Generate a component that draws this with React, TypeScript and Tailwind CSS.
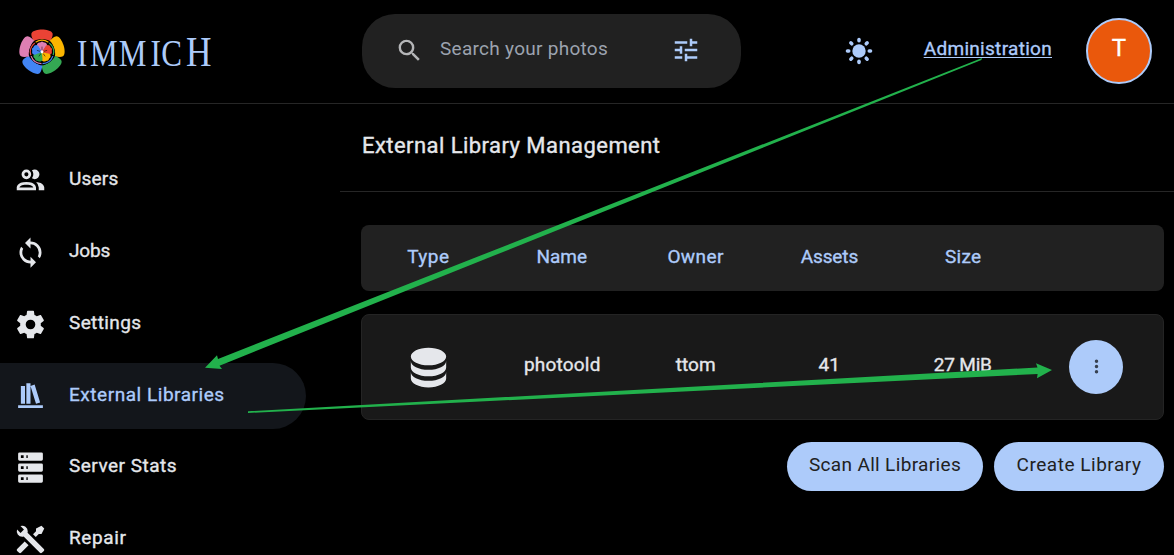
import type { ReactNode } from "react";

const icons = {
  magnify:
    "M9.5,3A6.5,6.5 0 0,1 16,9.5C16,11.11 15.41,12.59 14.44,13.73L14.71,14H15.5L20.5,19L19,20.5L14,15.5V14.71L13.73,14.44C12.59,15.41 11.11,16 9.5,16A6.5,6.5 0 0,1 3,9.5A6.5,6.5 0 0,1 9.5,3M9.5,5C7,5 5,7 5,9.5C5,12 7,14 9.5,14C12,14 14,12 14,9.5C14,7 12,5 9.5,5Z",
  tune: "M3 17v2h6v-2H3zM3 5v2h10V5H3zm10 16v-2h8v-2h-8v-2h-2v6h2zM7 9v2H3v2h4v2h2V9H7zm14 4v-2H11v2h10zm-6-4h2V7h4V5h-4V3h-2v6z",
  users:
    "M13.07 10.41A5 5 0 0 0 13.07 4.59A3.39 3.39 0 0 1 15 4A3.5 3.5 0 0 1 15 11A3.39 3.39 0 0 1 13.07 10.41M5.5 7.5A3.5 3.5 0 1 1 9 11A3.5 3.5 0 0 1 5.5 7.5M7.5 7.5A1.5 1.5 0 1 0 9 6A1.5 1.5 0 0 0 7.5 7.5M16 17V19H2V17S2 13 9 13 16 17 16 17M14 17C13.86 16.22 12.67 15 9 15S4.07 16.31 4 17M15.95 13A5.32 5.32 0 0 1 18 17V19H22V17S22 13.37 15.94 13Z",
  sync: "M12,18A6,6 0 0,1 6,12C6,11 6.25,10.03 6.7,9.2L5.24,7.74C4.46,8.97 4,10.43 4,12A8,8 0 0,0 12,20V23L16,19L12,15M12,4V1L8,5L12,9V6A6,6 0 0,1 18,12C18,13 17.75,13.97 17.3,14.8L18.76,16.26C19.54,15.03 20,13.57 20,12A8,8 0 0,0 12,4Z",
  cog: "M12,15.5A3.5,3.5 0 0,1 8.5,12A3.5,3.5 0 0,1 12,8.5A3.5,3.5 0 0,1 15.5,12A3.5,3.5 0 0,1 12,15.5M19.43,12.97C19.47,12.65 19.5,12.33 19.5,12C19.5,11.67 19.47,11.34 19.43,11L21.54,9.37C21.73,9.22 21.78,8.95 21.66,8.73L19.66,5.27C19.54,5.05 19.27,4.96 19.05,5.05L16.56,6.05C16.04,5.66 15.5,5.32 14.87,5.07L14.5,2.42C14.46,2.18 14.25,2 14,2H10C9.75,2 9.54,2.18 9.5,2.42L9.13,5.07C8.5,5.32 7.96,5.66 7.44,6.05L4.95,5.05C4.73,4.96 4.46,5.05 4.34,5.27L2.34,8.73C2.21,8.95 2.27,9.22 2.46,9.37L4.57,11C4.53,11.34 4.5,11.67 4.5,12C4.5,12.33 4.53,12.65 4.57,12.97L2.46,14.63C2.27,14.78 2.21,15.05 2.34,15.27L4.34,18.73C4.46,18.95 4.73,19.03 4.95,18.95L7.44,17.94C7.96,18.34 8.5,18.68 9.13,18.93L9.5,21.58C9.54,21.82 9.75,22 10,22H14C14.25,22 14.46,21.82 14.5,21.58L14.87,18.93C15.5,18.67 16.04,18.34 16.56,17.94L19.05,18.95C19.27,19.03 19.54,18.95 19.66,18.73L21.66,15.27C21.78,15.05 21.73,14.78 21.54,14.63L19.43,12.97Z",
  bookshelf: "M9 3V18H12V3H9M12 5L16 18L19 17L15 4L12 5M5 5V18H8V5H5M3 19V21H21V19H3Z",
  server:
    "M4,1H20A1,1 0 0,1 21,2V6A1,1 0 0,1 20,7H4A1,1 0 0,1 3,6V2A1,1 0 0,1 4,1M4,9H20A1,1 0 0,1 21,10V14A1,1 0 0,1 20,15H4A1,1 0 0,1 3,14V10A1,1 0 0,1 4,9M4,17H20A1,1 0 0,1 21,18V22A1,1 0 0,1 20,23H4A1,1 0 0,1 3,22V18A1,1 0 0,1 4,17M9,5H10V3H9V5M9,13H10V11H9V13M9,21H10V19H9V21M5,3V5H7V3H5M5,11V13H7V11H5M5,19V21H7V19H5Z",
  tools:
    "M21.71 20.29L20.29 21.71A1 1 0 0 1 18.88 21.71L7 9.85A3.81 3.81 0 0 1 6 10A4 4 0 0 1 2.22 4.7L4.76 7.24L5.29 6.71L6.71 5.29L7.24 4.76L4.7 2.22A4 4 0 0 1 10 6A3.81 3.81 0 0 1 9.85 7L21.71 18.88A1 1 0 0 1 21.71 20.29M2.29 18.88A1 1 0 0 0 2.29 20.29L3.71 21.71A1 1 0 0 0 5.12 21.71L10.59 16.25L7.76 13.42M20 2L16 4V6L13.83 8.17L15.83 10.17L18 8H20L22 4Z",
  database:
    "M12,3C7.58,3 4,4.79 4,7C4,9.21 7.58,11 12,11C16.42,11 20,9.21 20,7C20,4.79 16.42,3 12,3M4,9V12C4,14.21 7.58,16 12,16C16.42,16 20,14.21 20,12V9C20,11.21 16.42,13 12,13C7.58,13 4,11.21 4,9M4,14V17C4,19.21 7.58,21 12,21C16.42,21 20,19.21 20,17V14C20,16.21 16.42,18 12,18C7.58,18 4,16.21 4,14Z",
  dots: "M12,16A2,2 0 0,1 14,18A2,2 0 0,1 12,20A2,2 0 0,1 10,18A2,2 0 0,1 12,16M12,10A2,2 0 0,1 14,12A2,2 0 0,1 12,14A2,2 0 0,1 10,12A2,2 0 0,1 12,10M12,4A2,2 0 0,1 14,6A2,2 0 0,1 12,8A2,2 0 0,1 10,6A2,2 0 0,1 12,4Z",
};

function Icon({ name, className }: { name: keyof typeof icons; className: string }) {
  return (
    <svg viewBox="0 0 24 24" className={`shrink-0 fill-current ${className}`} aria-hidden="true">
      <path d={icons[name]} />
    </svg>
  );
}

const outerPetals = ["#ea4335", "#fbb500", "#34a853", "#4285f4", "#de7fb3"];
const innerPetals = ["#de7fb3", "#ea4335", "#fbb500", "#34a853", "#4285f4"];
const ringArcs = ["#fbb500", "#34a853", "#4285f4", "#de7fb3", "#ea4335"];

function Logo() {
  return (
    <svg viewBox="0 0 200 60" className="h-[60px] w-[200px]" role="img" aria-label="Immich">
      <g transform="translate(24 30)">
        {outerPetals.map((fill, i) => (
          <path
            key={fill}
            fill={fill}
            transform={`rotate(${i * 72})`}
            d="M-8.3 -10.8 C-9.6 -13.4 -11.1 -16.4 -10.6 -18.6 C-9.6 -21.6 -4 -22.6 0 -22.6 C4 -22.6 9.6 -21.6 10.6 -18.6 C11.1 -16.4 9.6 -13.4 8.3 -10.8 C5 -13.4 -5 -13.4 -8.3 -10.8Z"
          />
        ))}
        <circle r="12.6" fill="#000" />
        {ringArcs.map((fill, i) => (
          <path
            key={fill}
            stroke={fill}
            fill="none"
            strokeWidth="1.2"
            transform={`rotate(${i * 72})`}
            d="M-6.4 -9.7 A11.6 11.6 0 0 1 6.4 -9.7"
          />
        ))}
        {innerPetals.map((fill, i) => (
          <path
            key={fill}
            fill={fill}
            transform={`rotate(${i * 72})`}
            d="M0 -0.2 L-4.9 -5.8 C-5.6 -8 -4 -9.6 -2 -9.6 L0 -10.6 L2 -9.6 C4 -9.6 5.6 -8 4.9 -5.8Z"
          />
        ))}
        {innerPetals.map((fill, i) => (
          <path key={fill} stroke="#000" strokeWidth="0.5" transform={`rotate(${i * 72})`} d="M0 -2 V-5.4" />
        ))}
        <circle r="1.4" fill="#fff" />
      </g>
      <text
        transform="translate(0 44) scale(0.84 1)"
        x="70.4 85.6 119.8 157.6 170.6 200"
        fontSize="37"
        className="fill-[#adcbfa] font-['Liberation_Serif',serif] [-webkit-text-stroke:0px]"
      >
        IMMIC<tspan fontSize="42">H</tspan>
      </text>
    </svg>
  );
}

function Sun() {
  return (
    <svg viewBox="-14 -14 28 28" className="size-7 shrink-0 fill-[#adcbfa]" aria-hidden="true">
      <circle r="6.7" />
      {[0, 45, 90, 135, 180, 225, 270, 315].map((a) => (
        <rect key={a} x="-1.75" y="-13.3" width="3.5" height="4.8" rx="1.7" transform={`rotate(${a})`} />
      ))}
    </svg>
  );
}

const nav: { label: string; icon: keyof typeof icons; tracking: string; active?: boolean }[] = [
  { label: "Users", icon: "users", tracking: "tracking-[0.2px]" },
  { label: "Jobs", icon: "sync", tracking: "tracking-[-0.15px]" },
  { label: "Settings", icon: "cog", tracking: "tracking-[0.38px]" },
  { label: "External Libraries", icon: "bookshelf", tracking: "tracking-[0.54px]", active: true },
  { label: "Server Stats", icon: "server", tracking: "tracking-[0.5px]" },
  { label: "Repair", icon: "tools", tracking: "tracking-[0.6px]" },
];

const columns = [
  { label: "Type", tracking: "pl-px tracking-[0.5px]" },
  { label: "Name", tracking: "tracking-[0px]" },
  { label: "Owner", tracking: "tracking-[0.4px]" },
  { label: "Assets", tracking: "tracking-[-0.1px]" },
  { label: "Size", tracking: "tracking-[0.3px]" },
];

function Cell({ children, className = "" }: { children?: ReactNode; className?: string }) {
  return <div className={`flex items-center justify-center ${className}`}>{children}</div>;
}

function Arrows() {
  return (
    <svg viewBox="0 0 1174 555" className="pointer-events-none absolute inset-0 h-[555px] w-[1174px] fill-[#22b14c]" aria-hidden="true">
      <path d="M982 58 L981.4 60 L219.5 365.7 L222 369 L205 367.8 L217 355.3 L218 358.9 Z" />
      <path d="M248 411.3 L1037.5 367.5 L1036 363.3 L1052 370.1 L1037 378.3 L1037.6 374 L248 413 Z" />
    </svg>
  );
}

export default function App() {
  return (
    <div className="relative flex h-[555px] w-[1174px] flex-col overflow-hidden bg-black font-[Roboto,sans-serif] text-[19px] font-normal text-[#e5e7eb] [-webkit-text-stroke:0.35px]">
      <header className="flex h-[104px] shrink-0 items-center border-b border-[#262626] pr-[22px] pl-[18px]">
        <div className="w-[344px] shrink-0">
          <Logo />
        </div>
        <div className="mb-px flex h-[74px] w-[379px] items-center rounded-[33px] bg-[#212121] pr-[40.5px] pl-[33px]">
          <Icon name="magnify" className="mb-[2px] size-[29px] text-[#b5b6b8]" />
          <span className="grow pb-[3px] pl-4 tracking-[0.28px] text-[#9ca3af] [-webkit-text-stroke:0px]">Search your photos</span>
          <Icon name="tune" className="mb-[2px] size-[30px] text-[#adcbfa]" />
        </div>
        <div className="mb-px ml-auto flex items-center">
          <Sun />
          <a className="mb-[3px] ml-[50.5px] tracking-[0.3px] text-[#adcbfa] underline decoration-1 underline-offset-2">
            Administration
          </a>
          <div className="ml-[34px] flex size-[66px] items-center justify-center rounded-full border-2 border-[#adcbfa] bg-[#ea580c] pb-[7px] text-2xl text-white">
            T
          </div>
        </div>
      </header>

      <div className="flex min-h-0 grow">
        <nav className="flex w-[340px] shrink-0 flex-col gap-[5.8px] pt-[43.5px]">
          {nav.map((item) => (
            <a
              key={item.label}
              className={`flex h-[66px] w-[306px] shrink-0 items-center rounded-r-full pl-[14px] ${item.active ? "bg-[#13161b] text-[#adcbfa]" : ""}`}
            >
              <Icon name={item.icon} className="size-[33px]" />
              <span className={`pb-[2px] pl-[22px] ${item.tracking}`}>{item.label}</span>
            </a>
          ))}
        </nav>

        <main className="flex min-w-0 grow flex-col">
          <div className="flex h-[88px] shrink-0 items-center border-b border-[#262626] pb-[4px] pl-[22px]">
            <h1 className="text-[22px] tracking-[0.45px]">External Library Management</h1>
          </div>
          <section className="flex flex-col pt-[33px] pr-[10px] pl-[21px]">
            <div className="grid h-[66px] grid-cols-6 rounded-lg bg-[#212121] pb-[2px] text-[#adcbfa]">
              {columns.map((c) => (
                <Cell key={c.label} className={c.tracking}>
                  {c.label}
                </Cell>
              ))}
            </div>
            <div className="mt-[23px] grid h-[106px] grid-cols-6 rounded-lg border border-[#242424] bg-[#191919]">
              <Cell>
                <Icon name="database" className="size-[53px]" />
              </Cell>
              <Cell className="pb-[3px] tracking-[0.2px]">photoold</Cell>
              <Cell className="pb-[3px] tracking-[0.1px]">ttom</Cell>
              <Cell className="pb-[3px]">41</Cell>
              <Cell className="pb-[3px] tracking-[-0.2px]">27 MiB</Cell>
              <Cell>
                <button className="flex size-[54px] items-center justify-center rounded-full bg-[#adcbfa] text-[#374151]">
                  <Icon name="dots" className="mb-px size-[21px]" />
                </button>
              </Cell>
            </div>
            <div className="mt-[22px] flex h-[49px] justify-end gap-[11px] text-[#212121] [-webkit-text-stroke:0px]">
              <button className="w-[196px] rounded-full bg-[#adcbfa] pb-[3px] tracking-[0.34px]">Scan All Libraries</button>
              <button className="w-[170px] rounded-full bg-[#adcbfa] pb-[3px] tracking-[0.52px]">Create Library</button>
            </div>
          </section>
        </main>
      </div>
      <Arrows />
    </div>
  );
}
